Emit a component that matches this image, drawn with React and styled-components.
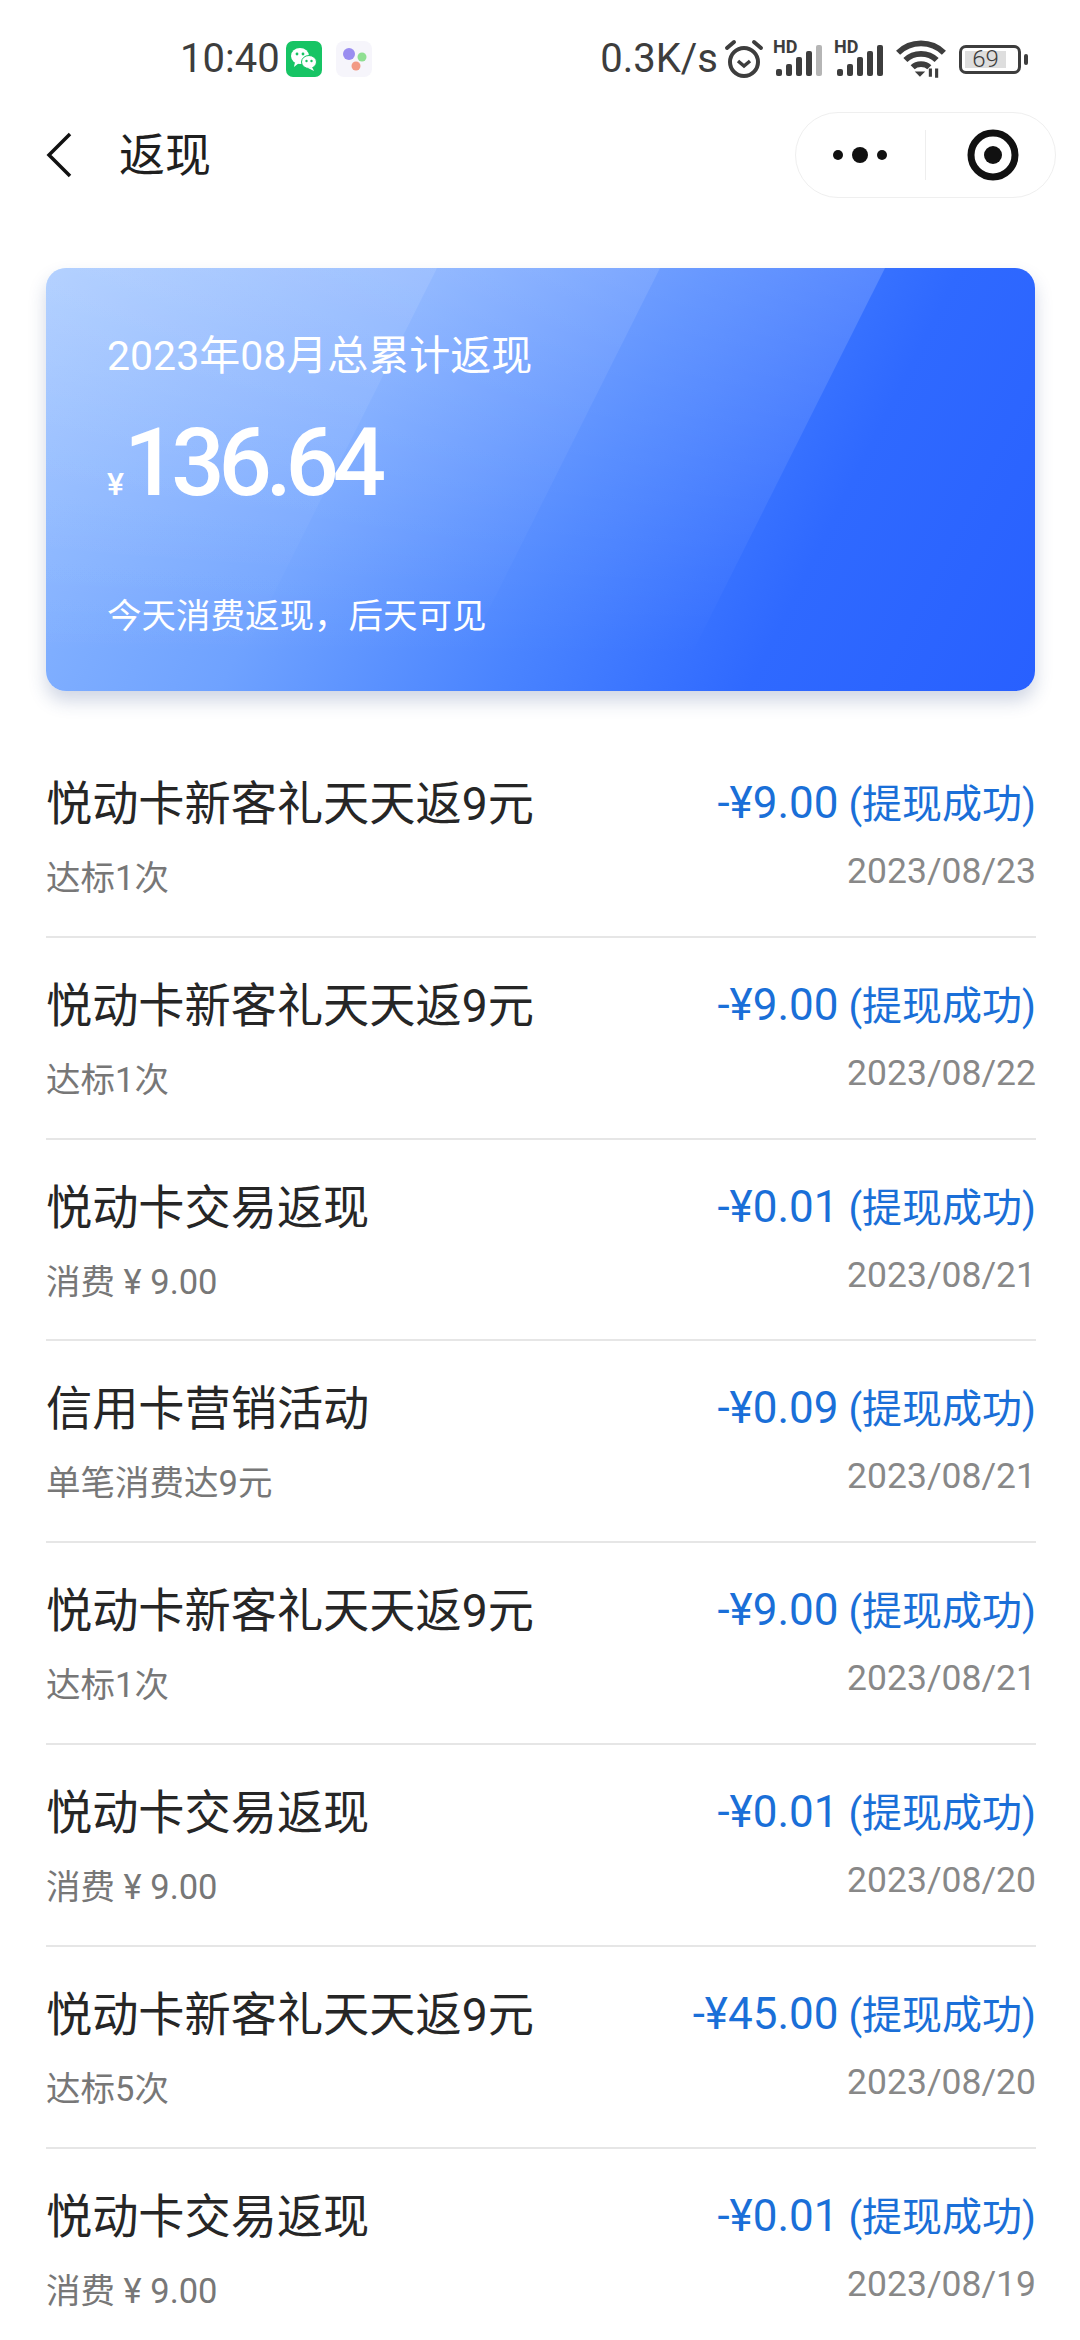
import styled, { createGlobalStyle } from "styled-components";

const rows = [
  { id: 1, title: "悦动卡新客礼天天返9元", sub: "达标1次", amount: "-¥9.00", date: "2023/08/23" },
  { id: 2, title: "悦动卡新客礼天天返9元", sub: "达标1次", amount: "-¥9.00", date: "2023/08/22" },
  { id: 3, title: "悦动卡交易返现", sub: "消费 ¥ 9.00", amount: "-¥0.01", date: "2023/08/21" },
  { id: 4, title: "信用卡营销活动", sub: "单笔消费达9元", amount: "-¥0.09", date: "2023/08/21" },
  { id: 5, title: "悦动卡新客礼天天返9元", sub: "达标1次", amount: "-¥9.00", date: "2023/08/21" },
  { id: 6, title: "悦动卡交易返现", sub: "消费 ¥ 9.00", amount: "-¥0.01", date: "2023/08/20" },
  { id: 7, title: "悦动卡新客礼天天返9元", sub: "达标5次", amount: "-¥45.00", date: "2023/08/20" },
  { id: 8, title: "悦动卡交易返现", sub: "消费 ¥ 9.00", amount: "-¥0.01", date: "2023/08/19" },
];

const GlobalStyle = createGlobalStyle`
  html, body {
    margin: 0;
    padding: 0;
    background: #fff;
  }
  body {
    font-family: Roboto, "Noto Sans CJK SC", sans-serif;
    font-weight: 300;
    overflow: hidden;
  }
`;

const Page = styled.div`
  width: 1080px;
  height: 2340px;
  overflow: hidden;
`;

const StatusBar = styled.div`
  height: 112px;
  box-sizing: border-box;
  padding: 38px 52px 0 180px;
  display: flex;
  align-items: flex-start;
  color: #3d3d3d;
`;

const StatusText = styled.span`
  font-size: 40px;
  line-height: 42px;
  font-weight: 400;
`;

const StatusLeft = styled.div`
  display: flex;
  align-items: center;
  gap: 6px;
`;

const StatusRight = styled.div`
  margin-left: auto;
  display: flex;
  align-items: center;
`;

const NavBar = styled.div`
  height: 86px;
  padding: 0 24px 0 45px;
  display: flex;
  align-items: center;
`;

const NavTitle = styled.div`
  margin: -9px 0 0 46px;
  font-size: 46px;
  font-weight: 400;
  color: #1f1f1f;
`;

const Capsule = styled.div`
  margin-left: auto;
  width: 261px;
  height: 86px;
  box-sizing: border-box;
  border: 1px solid #efefef;
  border-radius: 43px;
  display: flex;
  align-items: center;
`;

const CapsuleSlot = styled.div`
  width: 130px;
  height: 100%;
  box-sizing: border-box;
  display: flex;
  align-items: center;
  justify-content: center;
  padding-left: ${(p) => p.$nudge || 0}px;
`;

const CapsuleDivider = styled.div`
  width: 1px;
  height: 50px;
  background: #eeeeee;
`;

const CardShadow = styled.div`
  margin: 70px 45px 0 46px;
  border-radius: 20px;
  box-shadow: 0 10px 18px rgba(40, 70, 130, 0.22);
`;

const Card = styled.section`
  position: relative;
  height: 423px;
  box-sizing: border-box;
  padding: 63px 0 0 61px;
  border-radius: 20px;
  overflow: hidden;
  color: #fff;
  background: linear-gradient(116.7deg, #90bbff 0%, #6fa2ff 32%, #4a84ff 55%, #2f69ff 76%, #2860ff 100%);
`;

const Band = styled.div`
  position: absolute;
  inset: 0;
  clip-path: polygon(0 0, ${(p) => p.$edge}px 0, ${(p) => p.$edge - 212}px 423px, 0 423px);
  background: linear-gradient(to bottom, rgba(255, 255, 255, ${(p) => p.$alpha}), rgba(255, 255, 255, 0) 92%);
`;

const CardText = styled.div`
  position: relative;
  font-size: 41px;
  line-height: 50px;
  font-weight: 400;
`;

const AmountLine = styled.div`
  position: relative;
  margin-top: 35px;
  display: flex;
  align-items: baseline;
  line-height: 94px;
`;

const Yen = styled.span`
  font-size: 32px;
  font-weight: 500;
`;

const Total = styled.span`
  font-size: 94px;
  font-weight: 500;
  letter-spacing: -6.2px;
`;

const CardNote = styled(CardText)`
  margin-top: 60px;
  font-size: 34.5px;
`;

const List = styled.div`
  margin: 45px 44px 0 46px;
`;

const Row = styled.div`
  height: 201.8px;
  box-sizing: border-box;
  padding-top: 41px;
  display: flex;
  justify-content: space-between;
  border-bottom: ${(p) => (p.$last ? "none" : "2px solid #e6e6e6")};
`;

const Column = styled.div`
  display: flex;
  flex-direction: column;
  align-items: ${(p) => (p.$right ? "flex-end" : "flex-start")};
`;

const Title = styled.div`
  font-size: 46.2px;
  line-height: 54px;
  font-weight: 400;
  color: #262626;
`;

const Sub = styled.div`
  margin-top: 27px;
  font-size: 34.5px;
  line-height: 40px;
  font-weight: 400;
  color: #777;
`;

const Amount = styled.div`
  font-size: 40px;
  line-height: 52px;
  font-weight: 400;
  color: #1a6fd8;
`;

const AmountValue = styled.span`
  font-size: 44px;
`;

const DateText = styled.div`
  margin-top: 20px;
  font-size: 35.5px;
  line-height: 40px;
  font-weight: 400;
  color: #888;
`;

const Back = () => (
  <svg width="28" height="48" viewBox="0 0 28 48" fill="none">
    <path d="M25 3 L4 24 L25 45" stroke="#111" strokeWidth="3.5" />
  </svg>
);

const Dots = () => (
  <svg width="56" height="18" viewBox="0 0 56 18" fill="#111">
    <circle cx="6" cy="9" r="5" />
    <circle cx="28" cy="9" r="8" />
    <circle cx="50" cy="9" r="5" />
  </svg>
);

const Target = () => (
  <svg width="52" height="52" viewBox="0 0 52 52" fill="none">
    <circle cx="26" cy="26" r="22" stroke="#111" strokeWidth="7" />
    <circle cx="26" cy="26" r="9" fill="#111" />
  </svg>
);

const WeChat = () => (
  <svg width="36" height="36" viewBox="0 0 36 36">
    <rect width="36" height="36" rx="7" fill="#16c464" />
    <ellipse cx="14" cy="15" rx="9" ry="8" fill="#fff" />
    <path d="M9 21 L8 26 L13 22 Z" fill="#fff" />
    <ellipse cx="23" cy="21" rx="7.5" ry="6.5" fill="#fff" stroke="#16c464" />
    <path d="M26 26 L28 30 L22 27 Z" fill="#fff" />
    <circle cx="11" cy="13" r="1.4" fill="#16c464" />
    <circle cx="17" cy="13" r="1.4" fill="#16c464" />
    <circle cx="20.5" cy="20" r="1.2" fill="#16c464" />
    <circle cx="25.5" cy="20" r="1.2" fill="#16c464" />
  </svg>
);

const Assistant = () => (
  <svg width="36" height="36" viewBox="0 0 36 36">
    <rect width="36" height="36" rx="8" fill="#f6f5fb" />
    <circle cx="13" cy="13" r="6" fill="#9a8df0" />
    <circle cx="26" cy="16" r="4.5" fill="#8fdf92" />
    <circle cx="20" cy="25" r="4.5" fill="#f29a85" />
  </svg>
);

const Alarm = () => (
  <svg width="40" height="40" viewBox="0 0 40 40" fill="none" stroke="#3d3d3d">
    <circle cx="20" cy="23" r="14" strokeWidth="4" />
    <path d="M14 22 L20 27 L26 22" strokeWidth="3.5" />
    <path d="M3 9 L10 3 M37 9 L30 3" strokeWidth="4" strokeLinecap="round" />
  </svg>
);

const SignalBox = styled.div`
  position: relative;
  width: 50px;
  height: 34px;
`;

const HdLabel = styled.span`
  position: absolute;
  left: 0;
  top: -3px;
  font-size: 18px;
  line-height: 16px;
  font-weight: 700;
  color: #3d3d3d;
`;

const Signal = ({ dim }) => (
  <SignalBox>
    <HdLabel>HD</HdLabel>
    <svg width="50" height="34" viewBox="0 0 50 34">
      <rect x="3" y="27" width="6" height="7" rx="2" fill="#3d3d3d" />
      <rect x="13" y="22" width="6" height="12" rx="2" fill="#3d3d3d" />
      <rect x="23" y="15" width="6" height="19" rx="2" fill="#3d3d3d" />
      <rect x="33" y="9" width="6" height="25" rx="2" fill="#3d3d3d" />
      <rect x="43" y="3" width="6" height="31" rx="2" fill={dim ? "#b5b5b5" : "#3d3d3d"} />
    </svg>
  </SignalBox>
);

const Wifi = () => (
  <svg width="50" height="40" viewBox="0 0 48 38" fill="none" stroke="#3d3d3d" strokeWidth="5.5">
    <path d="M2 13 C14 1 34 1 46 13" />
    <path d="M9 20 C17 12 31 12 39 20" />
    <path d="M16 27 C20 23 28 23 32 27" />
    <path d="M18 31 L23 36 L28 31 Z" fill="#3d3d3d" stroke="none" />
    <path d="M33 28 V36 M39 28 V37" strokeWidth="3" />
  </svg>
);

const BatteryBody = styled.div`
  width: 62px;
  height: 29px;
  box-sizing: border-box;
  padding: 3px;
  border: 3px solid #3d3d3d;
  border-radius: 7px;
`;

const BatteryFill = styled.div`
  width: 82%;
  height: 100%;
  background: #dedede;
  display: flex;
  align-items: center;
  justify-content: center;
  font-size: 24px;
  font-weight: 300;
  color: #3d3d3d;
`;

const BatteryCap = styled.div`
  width: 4px;
  height: 11px;
  margin-left: 3px;
  border-radius: 2px;
  background: #3d3d3d;
`;

const Battery = styled.div`
  margin-left: 13px;
  display: flex;
  align-items: center;
`;

const IconGap = styled.span`
  display: flex;
  margin-left: ${(p) => p.$gap}px;
`;

const App = () => {
  return (
    <Page>
      <GlobalStyle />
      <StatusBar>
        <StatusLeft>
          <StatusText>10:40</StatusText>
          <WeChat />
          <IconGap $gap={8}>
            <Assistant />
          </IconGap>
        </StatusLeft>
        <StatusRight>
          <StatusText>0.3K/s</StatusText>
          <IconGap $gap={6}>
            <Alarm />
          </IconGap>
          <IconGap $gap={9}>
            <Signal dim />
          </IconGap>
          <IconGap $gap={11}>
            <Signal />
          </IconGap>
          <IconGap $gap={12}>
            <Wifi />
          </IconGap>
          <Battery>
            <BatteryBody>
              <BatteryFill>69</BatteryFill>
            </BatteryBody>
            <BatteryCap />
          </Battery>
        </StatusRight>
      </StatusBar>
      <NavBar>
        <Back />
        <NavTitle>返现</NavTitle>
        <Capsule>
          <CapsuleSlot>
            <Dots />
          </CapsuleSlot>
          <CapsuleDivider />
          <CapsuleSlot $nudge={6}>
            <Target />
          </CapsuleSlot>
        </Capsule>
      </NavBar>
      <CardShadow>
        <Card>
          <Band $edge={391} $alpha={0.1} />
          <Band $edge={614} $alpha={0.1} />
          <Band $edge={839} $alpha={0.17} />
          <CardText>2023年08月总累计返现</CardText>
          <AmountLine>
            <Yen>¥</Yen>
            <Total>136.64</Total>
          </AmountLine>
          <CardNote>今天消费返现，后天可见</CardNote>
        </Card>
      </CardShadow>
      <List>
        {rows.map((row, i) => (
          <Row key={row.id} $last={i === rows.length - 1}>
            <Column>
              <Title>{row.title}</Title>
              <Sub>{row.sub}</Sub>
            </Column>
            <Column $right>
              <Amount>
                <AmountValue>{row.amount}</AmountValue> (提现成功)
              </Amount>
              <DateText>{row.date}</DateText>
            </Column>
          </Row>
        ))}
      </List>
    </Page>
  );
};

export default App;
